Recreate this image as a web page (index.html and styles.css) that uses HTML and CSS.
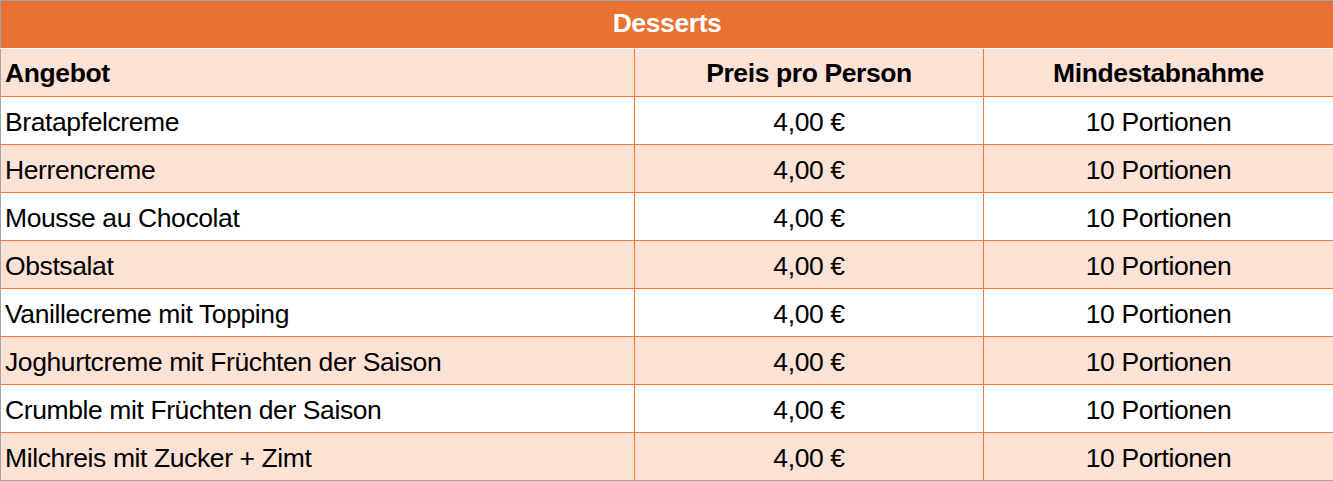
FILE: index.html
```html
<!DOCTYPE html>
<html lang="de">
<head>
<meta charset="utf-8">
<title>Desserts</title>
<link rel="stylesheet" href="styles.css">
</head>
<body>
<table class="menu">
  <colgroup>
    <col class="c1">
    <col class="c2">
    <col class="c3">
  </colgroup>
  <thead>
    <tr class="title-row"><th colspan="3">Desserts</th></tr>
    <tr class="head-row">
      <th class="left">Angebot</th>
      <th>Preis pro Person</th>
      <th>Mindestabnahme</th>
    </tr>
  </thead>
  <tbody>
    <tr><td class="left">Bratapfelcreme</td><td>4,00 €</td><td>10 Portionen</td></tr>
    <tr class="alt"><td class="left">Herrencreme</td><td>4,00 €</td><td>10 Portionen</td></tr>
    <tr><td class="left">Mousse au Chocolat</td><td>4,00 €</td><td>10 Portionen</td></tr>
    <tr class="alt"><td class="left">Obstsalat</td><td>4,00 €</td><td>10 Portionen</td></tr>
    <tr><td class="left">Vanillecreme mit Topping</td><td>4,00 €</td><td>10 Portionen</td></tr>
    <tr class="alt"><td class="left">Joghurtcreme mit Früchten der Saison</td><td>4,00 €</td><td>10 Portionen</td></tr>
    <tr><td class="left">Crumble mit Früchten der Saison</td><td>4,00 €</td><td>10 Portionen</td></tr>
    <tr class="alt"><td class="left">Milchreis mit Zucker + Zimt</td><td>4,00 €</td><td>10 Portionen</td></tr>
  </tbody>
</table>
</body>
</html>
```
FILE: styles.css
```css
html, body {
  margin: 0;
  padding: 0;
  background: #ffffff;
}

.menu {
  width: 1333px;
  table-layout: fixed;
  border-collapse: collapse;
  border: 1px solid #a3a3a3;
  font-family: "Liberation Sans", Arial, sans-serif;
  font-size: 26.5px;
  letter-spacing: -0.4px;
  color: #000000;
}

.c1 { width: 634px; }
.c2 { width: 349px; }
.c3 { width: 350px; }

.menu th,
.menu td {
  height: 48px;
  padding: 3px 4px 0;
  line-height: 30px;
  text-align: center;
  vertical-align: middle;
  border: 1px solid #f07a35;
  white-space: nowrap;
  box-sizing: border-box;
}

.menu .left {
  text-align: left;
}

.title-row th {
  padding: 0 4px 3px;
  background: #e97132;
  color: #ffffff;
  font-weight: bold;
  border: 1px solid #a3a3a3;
  border-bottom: 1px solid #ffffff;
}

.head-row th {
  padding-top: 1px;
  background: #fbe2d5;
  font-weight: bold;
  border-top-color: #ffffff;
}

.menu tbody tr {
  background: #ffffff;
}

.menu tbody tr.alt {
  background: #fbe2d5;
}

.menu tr > :first-child {
  border-left-color: #a3a3a3;
}

.menu tr > :last-child {
  border-right-color: #a3a3a3;
}

.menu tbody tr:last-child td {
  border-bottom-color: #a3a3a3;
}
```
